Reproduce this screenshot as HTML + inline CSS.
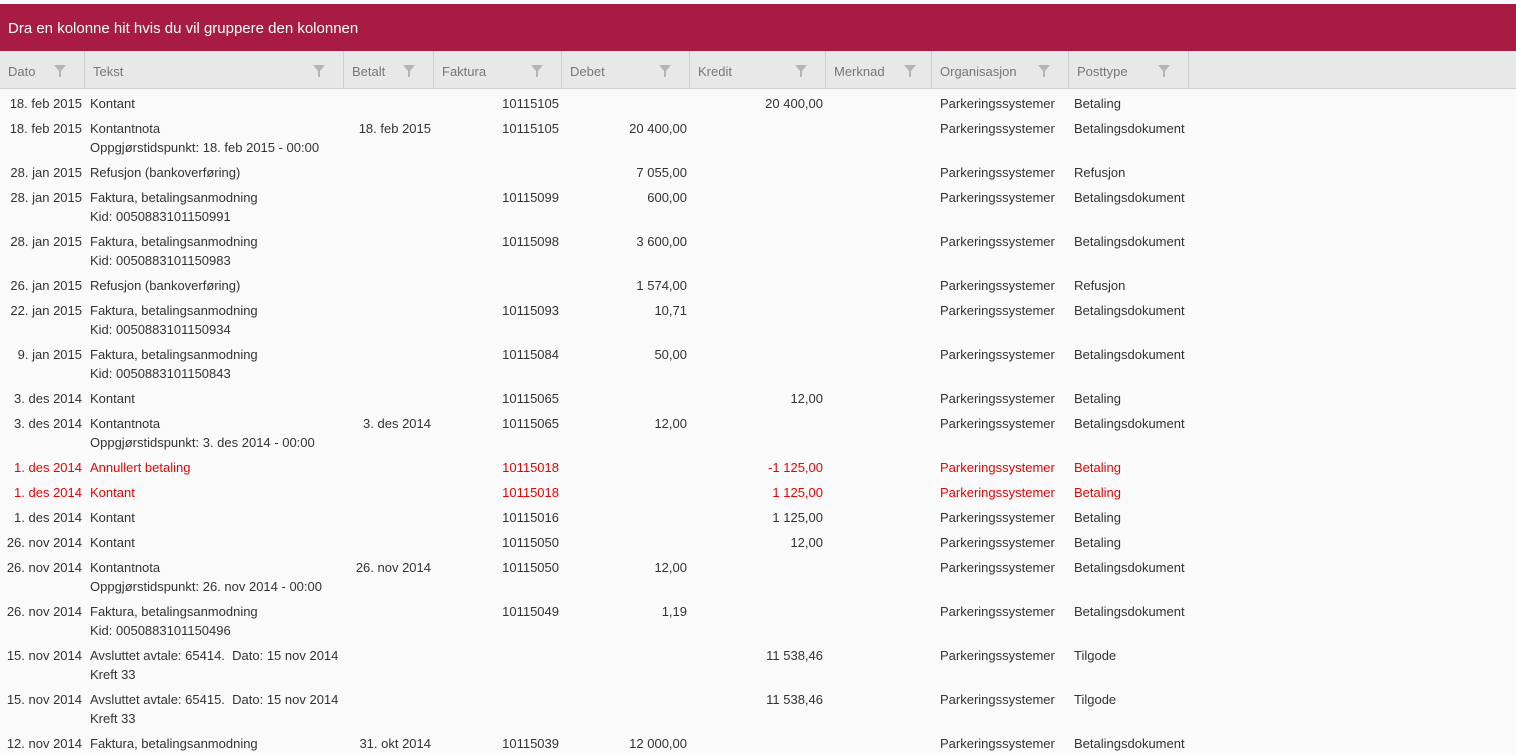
<!DOCTYPE html>
<html><head><meta charset="utf-8"><style>
body{margin:0;width:1516px;height:755px;overflow:hidden;background:#fafafa;font-family:"Liberation Sans",sans-serif;font-size:13px;color:#333;position:relative}
.top{position:absolute;left:0;top:4px;width:1516px;height:47px;background:#a81b42;color:#fff;font-size:15px;line-height:50px;padding-left:8px;box-sizing:border-box}
.hdr{position:absolute;left:0;top:51px;width:1516px;height:37px;background:#e8e8e8;border-bottom:1px solid #d0d0d0;color:#777;font-size:13px}
.hc{position:absolute;top:0;height:37px;line-height:41px;border-right:1px solid #d0d0d0;box-sizing:border-box;padding-left:8px}
.hc svg{position:absolute;top:14px}
.r{position:absolute;left:0;width:1516px;height:19px;line-height:19px;margin-top:2px}
.r span{position:absolute;white-space:nowrap}
.red{color:#e00}
.a{right:1434px}.b{left:90px}.c{right:1085px}.d{right:957px}.e{right:829px}.f{right:693px}.g{left:940px}.h{left:1074px}
</style></head><body>
<div class="top">Dra en kolonne hit hvis du vil gruppere den kolonnen</div>
<div class="hdr">
<div class="hc" style="left:0;width:85px">Dato<svg style="left:54px" width="12" height="12" viewBox="0 0 12 12"><path d="M0 0H12L7 6V12H5V6Z" fill="#b5b5b5"/></svg></div>
<div class="hc" style="left:85px;width:259px">Tekst<svg style="left:228px" width="12" height="12" viewBox="0 0 12 12"><path d="M0 0H12L7 6V12H5V6Z" fill="#b5b5b5"/></svg></div>
<div class="hc" style="left:344px;width:90px">Betalt<svg style="left:59px" width="12" height="12" viewBox="0 0 12 12"><path d="M0 0H12L7 6V12H5V6Z" fill="#b5b5b5"/></svg></div>
<div class="hc" style="left:434px;width:128px">Faktura<svg style="left:97px" width="12" height="12" viewBox="0 0 12 12"><path d="M0 0H12L7 6V12H5V6Z" fill="#b5b5b5"/></svg></div>
<div class="hc" style="left:562px;width:128px">Debet<svg style="left:97px" width="12" height="12" viewBox="0 0 12 12"><path d="M0 0H12L7 6V12H5V6Z" fill="#b5b5b5"/></svg></div>
<div class="hc" style="left:690px;width:136px">Kredit<svg style="left:105px" width="12" height="12" viewBox="0 0 12 12"><path d="M0 0H12L7 6V12H5V6Z" fill="#b5b5b5"/></svg></div>
<div class="hc" style="left:826px;width:106px">Merknad<svg style="left:78px" width="12" height="12" viewBox="0 0 12 12"><path d="M0 0H12L7 6V12H5V6Z" fill="#b5b5b5"/></svg></div>
<div class="hc" style="left:932px;width:137px">Organisasjon<svg style="left:106px" width="12" height="12" viewBox="0 0 12 12"><path d="M0 0H12L7 6V12H5V6Z" fill="#b5b5b5"/></svg></div>
<div class="hc" style="left:1069px;width:120px">Posttype<svg style="left:89px" width="12" height="12" viewBox="0 0 12 12"><path d="M0 0H12L7 6V12H5V6Z" fill="#b5b5b5"/></svg></div>
</div>

<div class="r" style="top:92px"><span class="a">18. feb 2015</span><span class="b">Kontant</span><span class="d">10115105</span><span class="f">20 400,00</span><span class="g">Parkeringssystemer</span><span class="h">Betaling</span></div>
<div class="r" style="top:117px"><span class="a">18. feb 2015</span><span class="b">Kontantnota</span><span class="c">18. feb 2015</span><span class="d">10115105</span><span class="e">20 400,00</span><span class="g">Parkeringssystemer</span><span class="h">Betalingsdokument</span></div>
<div class="r" style="top:136px"><span class="b">Oppgjørstidspunkt: 18. feb 2015 - 00:00</span></div>
<div class="r" style="top:161px"><span class="a">28. jan 2015</span><span class="b">Refusjon (bankoverføring)</span><span class="e">7 055,00</span><span class="g">Parkeringssystemer</span><span class="h">Refusjon</span></div>
<div class="r" style="top:186px"><span class="a">28. jan 2015</span><span class="b">Faktura, betalingsanmodning</span><span class="d">10115099</span><span class="e">600,00</span><span class="g">Parkeringssystemer</span><span class="h">Betalingsdokument</span></div>
<div class="r" style="top:205px"><span class="b">Kid: 0050883101150991</span></div>
<div class="r" style="top:230px"><span class="a">28. jan 2015</span><span class="b">Faktura, betalingsanmodning</span><span class="d">10115098</span><span class="e">3 600,00</span><span class="g">Parkeringssystemer</span><span class="h">Betalingsdokument</span></div>
<div class="r" style="top:249px"><span class="b">Kid: 0050883101150983</span></div>
<div class="r" style="top:274px"><span class="a">26. jan 2015</span><span class="b">Refusjon (bankoverføring)</span><span class="e">1 574,00</span><span class="g">Parkeringssystemer</span><span class="h">Refusjon</span></div>
<div class="r" style="top:299px"><span class="a">22. jan 2015</span><span class="b">Faktura, betalingsanmodning</span><span class="d">10115093</span><span class="e">10,71</span><span class="g">Parkeringssystemer</span><span class="h">Betalingsdokument</span></div>
<div class="r" style="top:318px"><span class="b">Kid: 0050883101150934</span></div>
<div class="r" style="top:343px"><span class="a">9. jan 2015</span><span class="b">Faktura, betalingsanmodning</span><span class="d">10115084</span><span class="e">50,00</span><span class="g">Parkeringssystemer</span><span class="h">Betalingsdokument</span></div>
<div class="r" style="top:362px"><span class="b">Kid: 0050883101150843</span></div>
<div class="r" style="top:387px"><span class="a">3. des 2014</span><span class="b">Kontant</span><span class="d">10115065</span><span class="f">12,00</span><span class="g">Parkeringssystemer</span><span class="h">Betaling</span></div>
<div class="r" style="top:412px"><span class="a">3. des 2014</span><span class="b">Kontantnota</span><span class="c">3. des 2014</span><span class="d">10115065</span><span class="e">12,00</span><span class="g">Parkeringssystemer</span><span class="h">Betalingsdokument</span></div>
<div class="r" style="top:431px"><span class="b">Oppgjørstidspunkt: 3. des 2014 - 00:00</span></div>
<div class="r red" style="top:456px"><span class="a">1. des 2014</span><span class="b">Annullert betaling</span><span class="d">10115018</span><span class="f">-1 125,00</span><span class="g">Parkeringssystemer</span><span class="h">Betaling</span></div>
<div class="r red" style="top:481px"><span class="a">1. des 2014</span><span class="b">Kontant</span><span class="d">10115018</span><span class="f">1 125,00</span><span class="g">Parkeringssystemer</span><span class="h">Betaling</span></div>
<div class="r" style="top:506px"><span class="a">1. des 2014</span><span class="b">Kontant</span><span class="d">10115016</span><span class="f">1 125,00</span><span class="g">Parkeringssystemer</span><span class="h">Betaling</span></div>
<div class="r" style="top:531px"><span class="a">26. nov 2014</span><span class="b">Kontant</span><span class="d">10115050</span><span class="f">12,00</span><span class="g">Parkeringssystemer</span><span class="h">Betaling</span></div>
<div class="r" style="top:556px"><span class="a">26. nov 2014</span><span class="b">Kontantnota</span><span class="c">26. nov 2014</span><span class="d">10115050</span><span class="e">12,00</span><span class="g">Parkeringssystemer</span><span class="h">Betalingsdokument</span></div>
<div class="r" style="top:575px"><span class="b">Oppgjørstidspunkt: 26. nov 2014 - 00:00</span></div>
<div class="r" style="top:600px"><span class="a">26. nov 2014</span><span class="b">Faktura, betalingsanmodning</span><span class="d">10115049</span><span class="e">1,19</span><span class="g">Parkeringssystemer</span><span class="h">Betalingsdokument</span></div>
<div class="r" style="top:619px"><span class="b">Kid: 0050883101150496</span></div>
<div class="r" style="top:644px"><span class="a">15. nov 2014</span><span class="b">Avsluttet avtale: 65414.&nbsp; Dato: 15 nov 2014</span><span class="f">11 538,46</span><span class="g">Parkeringssystemer</span><span class="h">Tilgode</span></div>
<div class="r" style="top:663px"><span class="b">Kreft 33</span></div>
<div class="r" style="top:688px"><span class="a">15. nov 2014</span><span class="b">Avsluttet avtale: 65415.&nbsp; Dato: 15 nov 2014</span><span class="f">11 538,46</span><span class="g">Parkeringssystemer</span><span class="h">Tilgode</span></div>
<div class="r" style="top:707px"><span class="b">Kreft 33</span></div>
<div class="r" style="top:732px"><span class="a">12. nov 2014</span><span class="b">Faktura, betalingsanmodning</span><span class="c">31. okt 2014</span><span class="d">10115039</span><span class="e">12 000,00</span><span class="g">Parkeringssystemer</span><span class="h">Betalingsdokument</span></div>
</body></html>
